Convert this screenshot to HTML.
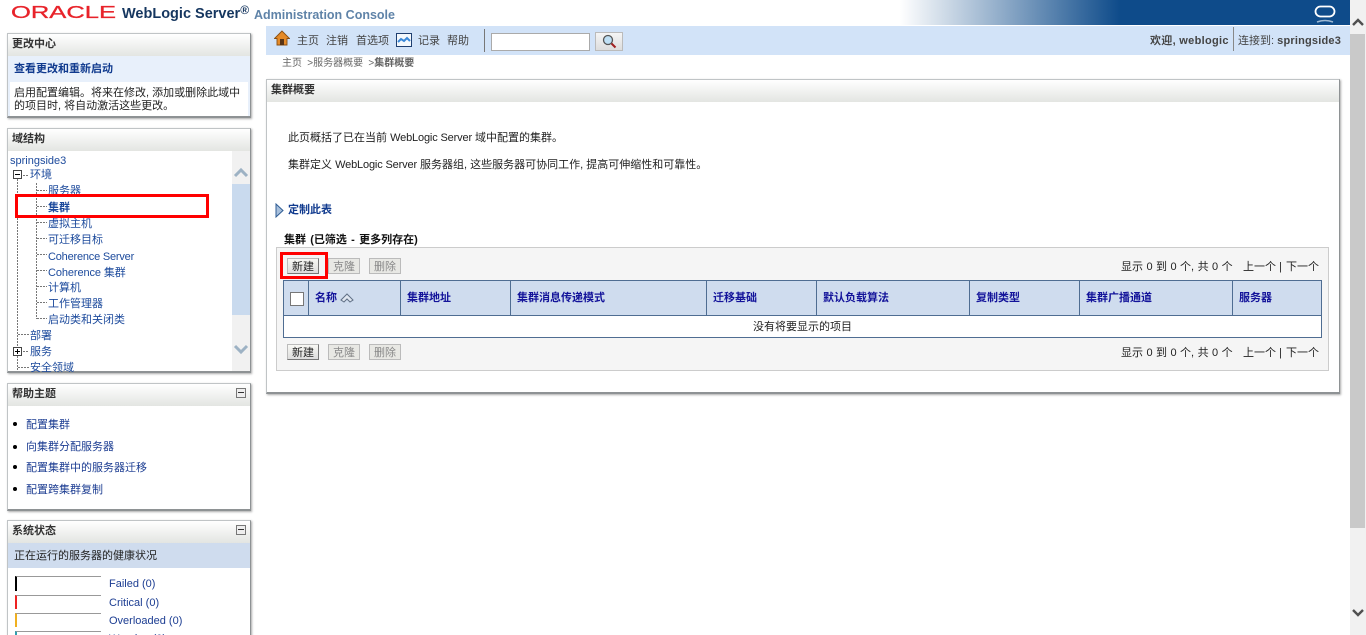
<!DOCTYPE html>
<html lang="zh"><head><meta charset="utf-8"><title>集群概要</title>
<style>
html,body{margin:0;padding:0;width:1366px;height:635px;overflow:hidden;background:#fff}
body{position:relative;font-family:"Liberation Sans","WenQuanYi Zen Hei","Noto Sans CJK SC",sans-serif;font-size:11px;color:#222}
div,span,a{position:absolute;white-space:nowrap}
b{font-weight:bold}
.l{color:#1c3d92}
.panel{background:#fff;border:1px solid #c0c4c6;border-right:1px solid #8e9294;border-bottom:2px solid #8e9294;box-shadow:1px 1px 2px #aaa;box-sizing:border-box;overflow:hidden}
.hd{left:0;top:0;right:0;height:22px;background:linear-gradient(#fff,#e3e5e2);line-height:21px;font-weight:bold;color:#333;text-indent:4px}
.tr{left:48px;color:#1c4a9c;line-height:16px;font-size:11px}
.btn{height:14px;width:30px;line-height:16px;text-align:center;border:1px solid #bbb;border-right-color:#777;border-bottom-color:#777;background:linear-gradient(#f8f8f4,#ddd);color:#222}
.dis{border:1px solid #bbb;background:#e8e8e4;color:#888}
.th{top:281px;height:34px;line-height:35px;font-weight:bold;color:#13139a;background:#cfdcee;border-right:1px solid #4f6d92;box-sizing:border-box;padding-left:6px}
.dv{width:1px;background:repeating-linear-gradient(#777 0 2px,transparent 2px 3px)}
.dh{height:1px;background:repeating-linear-gradient(90deg,#777 0 2px,transparent 2px 3px)}
.bar{left:15px;width:86px;height:14px;border-top:1px solid #999;border-left:2px solid;box-sizing:border-box}
.box{width:7px;height:7px;border:1px solid #444;background:#fff}
.ln{background:#000;height:1px;width:5px;left:15px}
.pg{line-height:14px;color:#222}
</style></head><body>

<!-- top header -->
<div style="left:0;top:0;width:1350px;height:25px;background:linear-gradient(90deg,#fff 0,#fff 900px,#0e4b8a 1120px,#0e4b8a 100%)"></div>
<svg style="position:absolute;left:0;top:0" width="122" height="25"><text x="11" y="18" font-family="Liberation Sans" font-size="17.500" fill="#e8232a" stroke="#e8232a" stroke-width=".3" textLength="105" lengthAdjust="spacingAndGlyphs">ORACLE</text></svg>
<div style="left:122px;top:5px;font-size:14.5px;font-weight:bold;color:#15365f;line-height:18px">WebLogic Server<sup style="font-size:12px;line-height:0;vertical-align:4px">®</sup></div>
<div style="left:254px;top:7px;font-size:12.5px;font-weight:bold;color:#5f83a8;line-height:16px">Administration Console</div>
<svg style="position:absolute;left:1314px;top:4px" width="22" height="20" viewBox="0 0 22 20"><rect x="1.500" y="2.500" width="19" height="10" rx="5" fill="none" stroke="#fff" stroke-width="1.800"/><path d="M3 18q8-3 16 0" fill="none" stroke="#9db8d3" stroke-width="1.500"/></svg>

<!-- scrollbar -->
<div style="left:1350px;top:0;width:16px;height:635px;background:#f1f1f1"></div>
<div style="left:1350px;top:34px;width:15px;height:494px;background:#c9c9c9"></div>
<svg style="position:absolute;left:1351px;top:16px" width="14" height="12"><path d="M2 9l5-5 5 5" fill="none" stroke="#505050" stroke-width="2.400"/></svg>
<svg style="position:absolute;left:1351px;top:607px" width="14" height="12"><path d="M2 3l5 5 5-5" fill="none" stroke="#505050" stroke-width="2.400"/></svg>

<!-- nav -->
<div style="left:266px;top:26px;width:1084px;height:29px;background:#d2e3f8"></div>
<svg style="position:absolute;left:274px;top:30px" width="16" height="16" viewBox="0 0 16 16"><path d="M8 1L.5 8.500H3V15h10V8.500h2.500z" fill="#e58a28" stroke="#8a4f12" stroke-width=".9"/><rect x="6" y="9" width="4" height="6" fill="#5a3414"/></svg>
<div style="left:297px;top:34px;line-height:14px;color:#444">主页</div>
<div style="left:326px;top:34px;line-height:14px;color:#444">注销</div>
<div style="left:356px;top:34px;line-height:14px;color:#444">首选项</div>
<svg style="position:absolute;left:396px;top:33px" width="16" height="14" viewBox="0 0 16 14"><rect x=".5" y=".5" width="15" height="13" fill="#f4f8fc" stroke="#1f3f70"/><path d="M2 9l3-3 3 2 3-3 3 3" fill="none" stroke="#3a88d8" stroke-width="2"/></svg>
<div style="left:418px;top:34px;line-height:14px;color:#444">记录</div>
<div style="left:447px;top:34px;line-height:14px;color:#444">帮助</div>
<div style="left:484px;top:29px;width:1px;height:23px;background:#777"></div>
<div style="left:491px;top:33px;width:99px;height:18px;background:#fff;border:1px solid #aaa;box-sizing:border-box"></div>
<div style="left:595px;top:32px;width:28px;height:19px;background:linear-gradient(#f5f5f5,#ddd);border:1px solid #bbb;box-sizing:border-box"></div>
<svg style="position:absolute;left:602px;top:34px" width="15" height="15" viewBox="0 0 15 15"><circle cx="6" cy="6" r="4.500" fill="#bfe0f5" stroke="#555" stroke-width="1.300"/><path d="M9.500 9.500l4 4" stroke="#a02020" stroke-width="2"/></svg>
<div style="left:1150px;top:34px;line-height:14px;font-weight:bold;color:#444;letter-spacing:.3px">欢迎, weblogic</div>
<div style="left:1233px;top:27px;width:1px;height:24px;background:#888"></div>
<div style="left:1238px;top:34px;line-height:14px;color:#444">连接到: <b style="letter-spacing:.2px">springside3</b></div>

<!-- breadcrumbs -->
<div style="left:282px;top:57px;line-height:14px;color:#666;font-size:10px;word-spacing:2.5px">主页 &gt;服务器概要 &gt;<b>集群概要</b></div>

<!-- left: change center -->
<div class="panel" style="left:7px;top:33px;width:244px;height:85px">
  <div class="hd">更改中心</div>
  <div style="left:0;top:22px;width:242px;height:26px;background:#e8f0fb;line-height:26px;font-weight:bold;color:#103a8e;text-indent:6px">查看更改和重新启动</div>
  <div style="left:0;top:48px;width:2px;height:34px;background:#e8f0fb"></div>
  <div style="left:240px;top:48px;width:2px;height:34px;background:#e8f0fb"></div>
  <div style="left:6px;top:53px;line-height:13px;color:#222">启用配置编辑。将来在修改, 添加或删除此域中<br>的项目时, 将自动激活这些更改。</div>
</div>

<!-- left: domain structure -->
<div class="panel" style="left:7px;top:128px;width:244px;height:245px">
  <div class="hd">域结构</div>
  <div style="left:224px;top:22px;width:18px;height:220px;background:#f1f1f1"></div>
  <div style="left:224px;top:55px;width:18px;height:131px;background:#c9daee"></div>
  <svg style="position:absolute;left:225px;top:37px" width="16" height="12"><path d="M2 10l6-6 6 6" fill="none" stroke="#9db2c4" stroke-width="3"/></svg>
  <svg style="position:absolute;left:225px;top:214px" width="16" height="12"><path d="M2 3l6 6 6-6" fill="none" stroke="#9db2c4" stroke-width="3"/></svg>
</div>
<div style="left:10px;top:154px;line-height:14px;font-size:11px;color:#1c4a9c">springside3</div>
<div class="dv" style="left:17px;top:179px;height:191px"></div>
<div class="dv" style="left:36px;top:183px;height:136px"></div>
<div class="box" style="left:13px;top:170px"></div><div class="ln" style="top:174px"></div>
<div class="box" style="left:13px;top:347px"></div><div class="ln" style="top:351px"></div><div style="left:17px;top:349px;width:1px;height:5px;background:#000"></div>
<div class="dh" style="left:23px;top:175px;width:6px"></div>
<div class="dh" style="left:18px;top:334px;width:11px"></div>
<div class="dh" style="left:23px;top:351px;width:6px"></div>
<div class="dh" style="left:18px;top:367px;width:11px"></div>
<div class="dh" style="left:37px;top:190px;width:10px"></div>
<div class="dh" style="left:37px;top:206px;width:10px"></div>
<div class="dh" style="left:37px;top:222px;width:10px"></div>
<div class="dh" style="left:37px;top:238px;width:10px"></div>
<div class="dh" style="left:37px;top:254px;width:10px"></div>
<div class="dh" style="left:37px;top:270px;width:10px"></div>
<div class="dh" style="left:37px;top:286px;width:10px"></div>
<div class="dh" style="left:37px;top:302px;width:10px"></div>
<div class="dh" style="left:37px;top:318px;width:10px"></div>
<div class="tr" style="left:30px;top:167px">环境</div>
<div class="tr" style="top:183px">服务器</div>
<div class="tr" style="top:200px"><b>集群</b></div>
<div class="tr" style="top:216px">虚拟主机</div>
<div class="tr" style="top:232px">可迁移目标</div>
<div class="tr" style="top:249px;letter-spacing:-.2px">Coherence Server</div>
<div class="tr" style="top:265px;letter-spacing:-.1px">Coherence 集群</div>
<div class="tr" style="top:280px">计算机</div>
<div class="tr" style="top:296px">工作管理器</div>
<div class="tr" style="top:312px">启动类和关闭类</div>
<div class="tr" style="left:30px;top:328px">部署</div>
<div class="tr" style="left:30px;top:344px">服务</div>
<div style="left:8px;top:360px;width:224px;height:12px;overflow:hidden"><div class="tr" style="left:22px;top:0">安全领域</div></div>
<div style="left:15px;top:194px;width:194px;height:24px;border:3px solid #f00;box-sizing:border-box"></div>

<!-- left: help -->
<div class="panel" style="left:7px;top:383px;width:244px;height:128px">
  <div class="hd">帮助主题</div>
</div>
<div style="left:236px;top:388px;width:8px;height:8px;border:1px solid #777;background:#eee"></div>
<div style="left:238px;top:392px;width:6px;height:1px;background:#333"></div>
<div style="left:13px;top:422px;width:4px;height:4px;border-radius:50%;background:#000"></div>
<div style="left:13px;top:445px;width:4px;height:4px;border-radius:50%;background:#000"></div>
<div style="left:13px;top:465px;width:4px;height:4px;border-radius:50%;background:#000"></div>
<div style="left:13px;top:487px;width:4px;height:4px;border-radius:50%;background:#000"></div>
<div class="l" style="left:26px;top:418px;line-height:14px">配置集群</div>
<div class="l" style="left:26px;top:440px;line-height:14px">向集群分配服务器</div>
<div class="l" style="left:26px;top:461px;line-height:14px">配置集群中的服务器迁移</div>
<div class="l" style="left:26px;top:483px;line-height:14px">配置跨集群复制</div>

<!-- left: system status -->
<div class="panel" style="left:7px;top:520px;width:244px;height:130px">
  <div class="hd">系统状态</div>
  <div style="left:0;top:22px;width:242px;height:25px;background:#cfdcee;line-height:26px;text-indent:6px;color:#222">正在运行的服务器的健康状况</div>
</div>
<div style="left:236px;top:525px;width:8px;height:8px;border:1px solid #777;background:#eee"></div>
<div style="left:238px;top:529px;width:6px;height:1px;background:#333"></div>
<div class="bar" style="top:576px;height:15px;border-left-color:#000"></div>
<div class="bar" style="top:595px;height:14px;border-left-color:#e22"></div>
<div class="bar" style="top:613px;height:14px;border-left-color:#f0b020"></div>
<div class="bar" style="top:631px;height:14px;border-left-color:#30a0b0"></div>
<div class="l" style="left:109px;top:576px;line-height:16px">Failed (0)</div>
<div class="l" style="left:109px;top:595px;line-height:16px">Critical (0)</div>
<div class="l" style="left:109px;top:613px;line-height:16px">Overloaded (0)</div>
<div class="l" style="left:109px;top:631px;line-height:16px">Warning (0)</div>

<!-- main panel -->
<div class="panel" style="left:266px;top:79px;width:1074px;height:315px">
  <div class="hd">集群概要</div>
</div>
<div style="left:288px;top:131px;line-height:14px;color:#222">此页概括了已在当前 <span style="position:static;letter-spacing:-.15px">WebLogic Server</span> 域中配置的集群。</div>
<div style="left:288px;top:158px;line-height:14px;color:#222">集群定义 <span style="position:static;letter-spacing:-.15px">WebLogic Server</span> 服务器组, 这些服务器可协同工作, 提高可伸缩性和可靠性。</div>
<svg style="position:absolute;left:275px;top:203px" width="10" height="15" viewBox="0 0 10 15"><path d="M1 1l7 6.500-7 6.500z" fill="#a8c0dc" stroke="#2f5d94"/></svg>
<div style="left:288px;top:203px;line-height:14px;font-weight:bold;color:#103a8e">定制此表</div>
<div style="left:284px;top:233px;line-height:14px;font-weight:bold;color:#111;word-spacing:1.2px">集群 (已筛选 - 更多列存在)</div>

<div style="left:276px;top:247px;width:1053px;height:124px;background:#f5f5f5;border:1px solid #ccc;box-sizing:border-box"></div>

<div class="btn" style="left:287px;top:258px">新建</div>
<div class="btn dis" style="left:328px;top:258px">克隆</div>
<div class="btn dis" style="left:369px;top:258px">删除</div>
<div style="left:280px;top:252px;width:48px;height:27px;border:3px solid #f00;box-sizing:border-box"></div>
<div class="pg" style="left:1121px;top:260px;word-spacing:.4px">显示 0 到 0 个, 共 0 个</div>
<div class="pg" style="left:1243px;top:260px">上一个</div><div class="pg" style="left:1279px;top:260px">|</div><div class="pg" style="left:1286px;top:260px">下一个</div>

<div style="left:283px;top:280px;width:1039px;height:58px;background:#fff;border:1px solid #4f6d92;box-sizing:border-box"></div>
<div class="th" style="left:284px;width:25px"></div>
<div style="left:290px;top:292px;width:12px;height:12px;background:#fff;border:1px solid #777"></div>
<div class="th" style="left:309px;width:92px">名称 <svg style="position:absolute;left:31px;top:12px" width="14" height="10"><path d="M1 7l6-6 6 6-3 2-3-3-3 3z" fill="#dfe6f0" stroke="#5f6f85"/></svg></div>
<div class="th" style="left:401px;width:110px">集群地址</div>
<div class="th" style="left:511px;width:196px">集群消息传递模式</div>
<div class="th" style="left:707px;width:110px">迁移基础</div>
<div class="th" style="left:817px;width:153px">默认负载算法</div>
<div class="th" style="left:970px;width:110px">复制类型</div>
<div class="th" style="left:1080px;width:153px">集群广播通道</div>
<div class="th" style="left:1233px;width:88px;border-right:0">服务器</div>
<div style="left:284px;top:315px;width:1037px;height:1px;background:#4f6d92"></div>
<div style="left:284px;top:320px;width:1037px;line-height:14px;text-align:center;color:#222">没有将要显示的项目</div>

<div class="btn" style="left:287px;top:344px">新建</div>
<div class="btn dis" style="left:328px;top:344px">克隆</div>
<div class="btn dis" style="left:369px;top:344px">删除</div>
<div class="pg" style="left:1121px;top:346px;word-spacing:.4px">显示 0 到 0 个, 共 0 个</div>
<div class="pg" style="left:1243px;top:346px">上一个</div><div class="pg" style="left:1279px;top:346px">|</div><div class="pg" style="left:1286px;top:346px">下一个</div>

</body></html>
